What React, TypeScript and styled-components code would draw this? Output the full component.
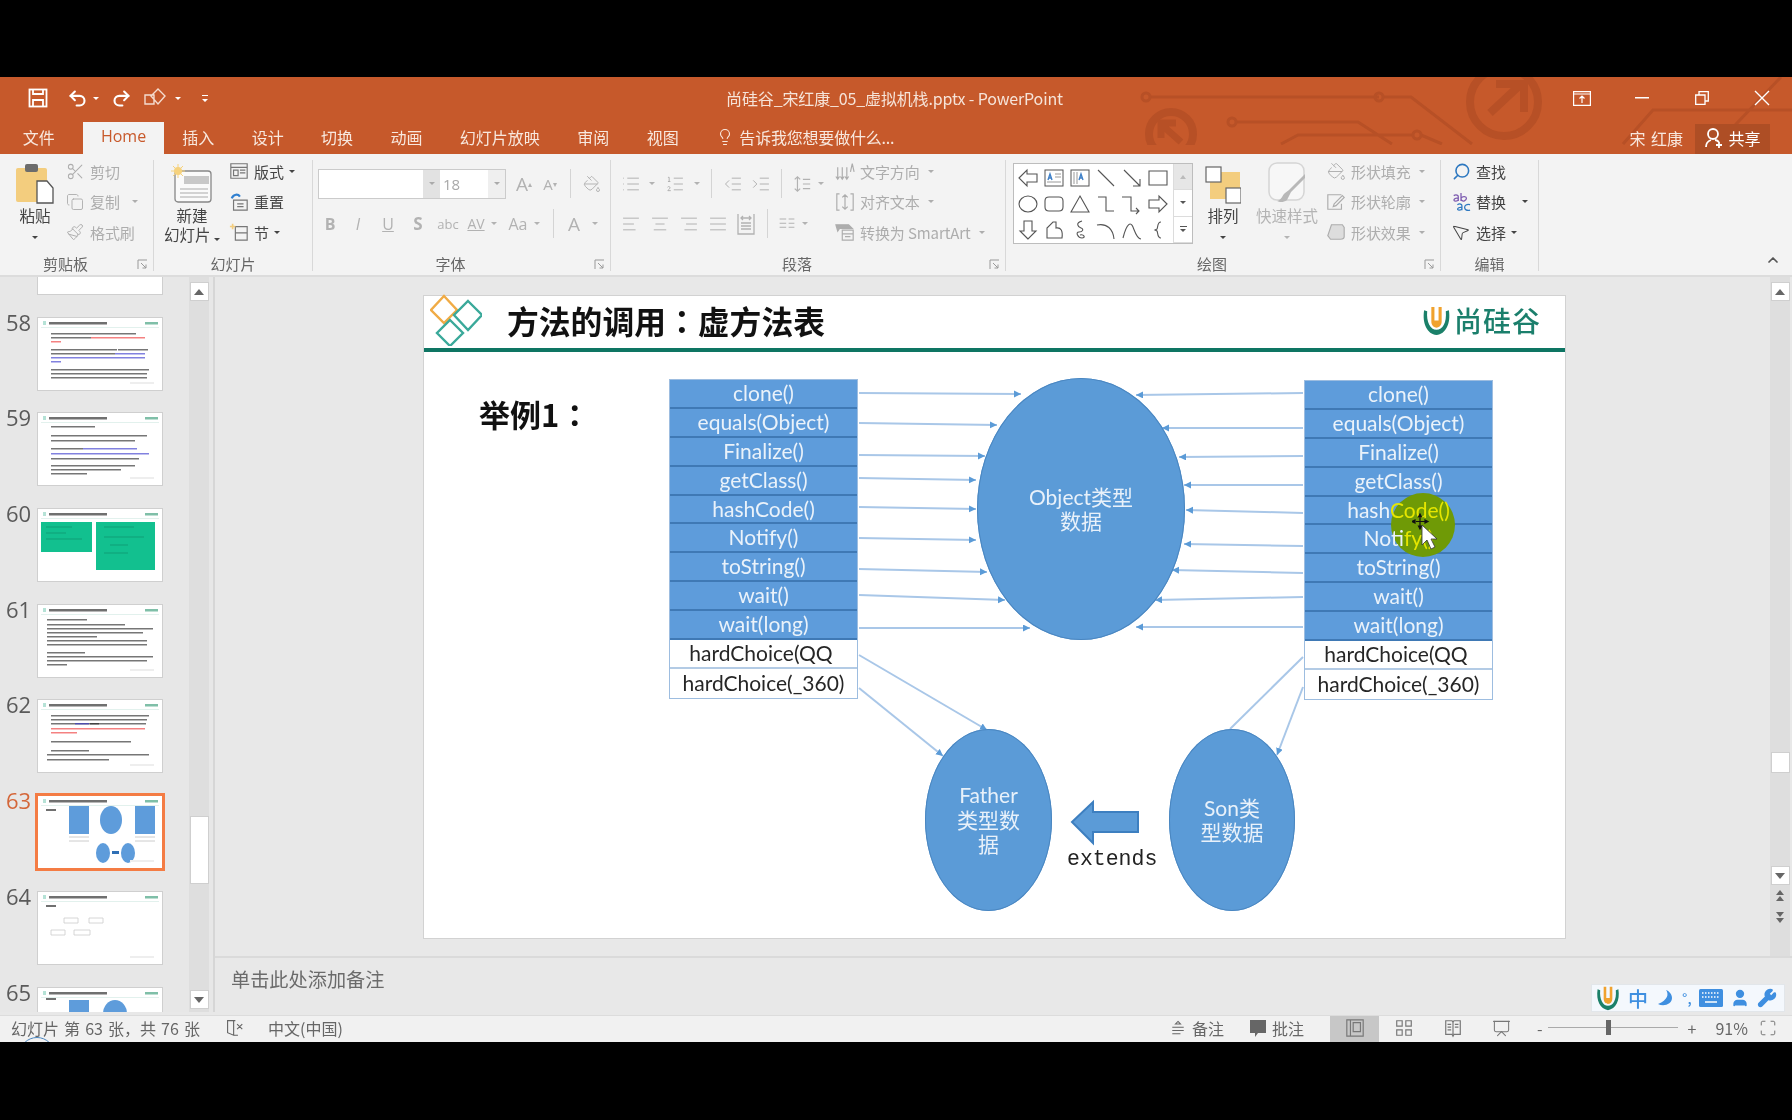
import React from "react";
import styled, { createGlobalStyle } from "styled-components";
import {
  AlignCenter,
  AlignJustify,
  AlignLeft,
  AlignRight,
  ChevronUp,
  Copy,
  Lightbulb,
  List,
  ListOrdered,
  IndentDecrease,
  IndentIncrease,
  Maximize,
  MousePointer2,
  Paintbrush,
  PaintBucket,
  Presentation,
  Redo2,
  Scissors,
  Search,
  Undo2,
  User,
  Wrench,
} from "lucide-react";

const CJK = `"Noto Sans CJK SC", "Noto Sans", sans-serif`;

const GlobalStyle = createGlobalStyle`
  html, body { margin: 0; padding: 0; background: #000; }
  * { box-sizing: border-box; }
`;

const Frame = styled.div`
  width: 1792px;
  height: 1120px;
  overflow: hidden;
  display: flex;
  flex-direction: column;
  background: #000;
  font-family: ${CJK};
  filter: blur(0.45px);
`;

const BlackBand = styled.div<{ $h: number }>`
  flex: none;
  height: ${(p) => p.$h}px;
  background: #000;
`;

const AppHead = styled.div`
  position: relative;
  flex: none;
  height: 77px;
  background: #c6592b;
  color: #f8e8de;
`;

const CircuitArt = styled.svg`
  position: absolute;
  left: 0;
  top: 0;
  pointer-events: none;
`;

const TitleBar = styled.div`
  position: relative;
  height: 47px;
  display: grid;
  grid-template-columns: 1fr auto 1fr;
  align-items: center;
  padding-bottom: 5px;
`;

const QuickAccess = styled.div`
  display: flex;
  align-items: center;
  padding-left: 28px;
  color: #fff;
  gap: 5px;
`;

const DocTitle = styled.div`
  font-size: 16px;
  letter-spacing: -0.15px;
  margin-left: -3px;
  color: #f6e4d9;
  white-space: nowrap;
`;

const WindowButtons = styled.div`
  display: flex;
  justify-content: flex-end;
`;

const WinBtn = styled.span`
  width: 60px;
  height: 30px;
  display: flex;
  align-items: center;
  justify-content: center;
`;

const TabRow = styled.div`
  position: relative;
  height: 30px;
  display: flex;
  align-items: stretch;
  padding-left: 4px;
`;

const Tab = styled.span<{ $active?: boolean }>`
  display: flex;
  align-items: center;
  padding: 0 ${(p) => (p.$active ? 17.5 : 18.7)}px 4px;
  font-size: 16px;
  white-space: nowrap;
  margin: ${(p) => (p.$active ? "-2px 0 0 10px" : "0")};
  background: ${(p) => (p.$active ? "#f3f3f3" : "transparent")};
  color: ${(p) => (p.$active ? "#c8592b" : "#f8e8de")};
  font-family: ${(p) => (p.$active ? `"Open Sans", sans-serif` : CJK)};
`;

const TellMe = styled.span`
  display: flex;
  align-items: center;
  gap: 5px;
  margin-left: 19px;
  padding-bottom: 4px;
  font-size: 16px;
  letter-spacing: -0.2px;
  white-space: nowrap;
`;

const AccountArea = styled.div`
  margin-left: auto;
  display: flex;
  align-items: center;
  gap: 12px;
  padding-right: 22px;
  font-size: 16px;
`;

const UserName = styled.span`
  word-spacing: 2px;
  padding-bottom: 3px;
`;

const ShareBtn = styled.span`
  width: 75px;
  height: 30px;
  display: flex;
  align-items: center;
  justify-content: center;
  gap: 4px;
  padding-bottom: 2px;
  background: #ae4e25;
  color: #fff;
`;

const Ribbon = styled.div`
  flex: none;
  position: relative;
  height: 123px;
  display: flex;
  background: #f3f3f3;
  border-bottom: 2px solid #dcdcdc;
`;

const Group = styled.section<{ $w: number }>`
  position: relative;
  flex: none;
  width: ${(p) => p.$w}px;
  display: flex;
  flex-direction: column;
  margin: 6px 0 4px;
  border-right: 1px solid #d8d8d8;
`;

const GroupBody = styled.div<{ $pl: number }>`
  flex: none;
  height: 97px;
  margin-top: -2px;
  display: flex;
  padding-left: ${(p) => p.$pl}px;
`;

const GroupLabel = styled.div<{ $launch?: boolean }>`
  position: relative;
  flex: 1;
  min-height: 0;
  display: flex;
  align-items: center;
  justify-content: center;
  padding-right: ${(p) => (p.$launch ? 22 : 0)}px;
  font-size: 15px;
  line-height: 17px;
  color: #666;
`;

const Launcher = styled.svg`
  position: absolute;
  right: 5px;
  bottom: 1px;
  color: #999;
`;

const Big = styled.div<{ $w: number; $ml?: number; $off?: boolean }>`
  flex: none;
  width: ${(p) => p.$w}px;
  margin-left: ${(p) => p.$ml ?? 0}px;
  display: flex;
  flex-direction: column;
  align-items: center;
  color: ${(p) => (p.$off ? "#b4b4b4" : "#444")};
  font-size: 15.5px;
  line-height: 19px;
  white-space: nowrap;
`;

const BigIcon = styled.div`
  height: 48px;
  display: flex;
  align-items: flex-end;
  justify-content: center;
  padding-bottom: 2px;
`;

const Stack = styled.div<{ $ml: number }>`
  flex: none;
  margin: -2px 0 0 ${(p) => p.$ml}px;
  display: flex;
  flex-direction: column;
`;

const Item = styled.div<{ $off?: boolean }>`
  flex: none;
  height: 30.5px;
  display: flex;
  align-items: center;
  gap: 5px;
  font-size: 15px;
  letter-spacing: -0.1px;
  white-space: nowrap;
  color: ${(p) => (p.$off ? "#adadad" : "#444")};
`;

const ItemIcon = styled.span`
  width: 20px;
  height: 20px;
  display: flex;
  align-items: center;
  justify-content: center;
`;

const Caret = styled.i<{ $ml?: number }>`
  display: inline-block;
  width: 0;
  height: 0;
  margin-left: ${(p) => p.$ml ?? 0}px;
  border-left: 3px solid transparent;
  border-right: 3px solid transparent;
  border-top: 3.5px solid currentColor;
`;

const BigCaret = styled(Caret)`
  margin-top: 11px;
`;

const ToolColumn = styled.div<{ $w: number }>`
  flex: none;
  width: ${(p) => p.$w}px;
  display: flex;
  flex-direction: column;
  gap: 11px;
  padding-top: 11px;
`;

const ToolRow = styled.div`
  height: 29px;
  display: flex;
  align-items: center;
  color: #b2b2b2;
`;

const Cell = styled.span<{ $w: number; $ml?: number; $weight?: number; $size?: number; $italic?: boolean; $under?: boolean }>`
  flex: none;
  width: ${(p) => p.$w}px;
  margin-left: ${(p) => p.$ml ?? 0}px;
  display: flex;
  align-items: center;
  justify-content: center;
  font-family: "Open Sans", sans-serif;
  font-size: ${(p) => p.$size ?? 15}px;
  font-weight: ${(p) => p.$weight ?? 400};
  font-style: ${(p) => (p.$italic ? "italic" : "normal")};
  text-decoration: ${(p) => (p.$under ? "underline" : "none")};
`;

const TinyMark = styled.sup`
  font-size: 8px;
`;

const ToolSep = styled.span<{ $ml: number }>`
  flex: none;
  width: 1px;
  height: 29px;
  margin-left: ${(p) => p.$ml}px;
  background: #d4d4d4;
`;

const FontBox = styled.div`
  flex: none;
  width: 188px;
  height: 30px;
  display: flex;
  border: 1px solid #cbcbcb;
  background: #fff;
`;

const FontName = styled.span`
  width: 104px;
`;

const FontDrop = styled.span<{ $tone: string }>`
  width: 17px;
  display: flex;
  align-items: center;
  justify-content: center;
  background: ${(p) => p.$tone};
  color: #aaa;
`;

const FontSize = styled.span`
  flex: 1;
  display: flex;
  align-items: center;
  padding-left: 3px;
  font-family: "Open Sans", sans-serif;
  font-size: 15px;
  color: #a8a8a8;
`;

const Gallery = styled.div`
  flex: none;
  margin: 5px 0 0 7px;
  width: 180px;
  height: 81px;
  display: flex;
  border: 1px solid #bdbdbd;
  background: #fff;
`;

const ShapeGrid = styled.div`
  width: 159px;
  padding: 1px;
  display: grid;
  grid-template-columns: repeat(6, 26px);
  grid-auto-rows: 26px;
  place-items: center;
`;

const GalleryScroll = styled.div`
  flex: 1;
  display: flex;
  flex-direction: column;
  border-left: 1px solid #dcdcdc;
`;

const GalleryBtn = styled.span<{ $off?: boolean }>`
  flex: 1;
  display: flex;
  flex-direction: column;
  gap: 2px;
  align-items: center;
  justify-content: center;
  color: ${(p) => (p.$off ? "#bbb" : "#555")};
  background: ${(p) => (p.$off ? "#e6e6e6" : "#fff")};
  border-bottom: 1px solid #dcdcdc;
`;

const UpTri = styled.i`
  width: 0;
  height: 0;
  border-left: 3px solid transparent;
  border-right: 3px solid transparent;
  border-bottom: 4px solid currentColor;
`;

const Bar = styled.i`
  width: 7px;
  height: 1px;
  background: currentColor;
`;

const CollapseBtn = styled.span`
  position: absolute;
  right: 11px;
  bottom: 2px;
  color: #555;
`;

const Workspace = styled.div`
  flex: none;
  height: 738px;
  display: flex;
  background: #e8e8e8;
`;

const Sidebar = styled.aside`
  flex: none;
  width: 215px;
  display: flex;
  background: #e7e7e7;
  margin-bottom: 3px;
  border-right: 2px solid #d6d6d6;
`;

const SlideList = styled.div`
  flex: none;
  width: 189px;
  overflow: hidden;
`;

const SlideRows = styled.div`
  margin-top: -55px;
`;

const SlideRow = styled.div<{ $current?: boolean }>`
  height: 95.7px;
  display: flex;
  align-items: flex-start;
  padding-left: 6px;
  font-family: "Open Sans", sans-serif;
  font-size: 22px;
  line-height: 20px;
  color: ${(p) => (p.$current ? "#d4673a" : "#5a5a5a")};
`;

const SlideNum = styled.span`
  width: 31.5px;
  margin-top: -6px;
`;

const ThumbBox = styled.div<{ $current?: boolean }>`
  flex: none;
  width: 124px;
  height: 72px;
  background: #fff;
  outline: ${(p) => (p.$current ? "3px solid #f47c44" : "1px solid #cfcfcf")};
  line-height: 0;
`;

const PreviewSvg = styled.svg`
  filter: blur(0.5px);
`;

const ScrollTrack = styled.div`
  flex: none;
  width: 20px;
  display: flex;
  flex-direction: column;
  align-items: center;
  padding: 5px 0 3px;
  background: #dedede;
`;

const ScrollBtn = styled.span`
  flex: none;
  width: 19px;
  height: 19px;
  display: flex;
  align-items: center;
  justify-content: center;
  background: #fff;
  border: 1px solid #cfcfcf;
  color: #666;
`;

const ScrollThumb = styled.span<{ $top: number; $h: number; $mb?: number }>`
  flex: none;
  width: 19px;
  height: ${(p) => p.$h}px;
  margin-top: ${(p) => p.$top}px;
  margin-bottom: ${(p) => (p.$mb ? `${p.$mb}px` : "auto")};
  background: #fff;
  border: 1px solid #cfcfcf;
`;

const DownTri = styled.i`
  width: 0;
  height: 0;
  border-left: 5px solid transparent;
  border-right: 5px solid transparent;
  border-top: 6px solid currentColor;
`;

const SmallUp = styled(UpTri)`
  border-left-width: 5px;
  border-right-width: 5px;
  border-bottom-width: 6px;
`;

const JumpUp = styled(UpTri)`
  border-left-width: 4px;
  border-right-width: 4px;
  border-bottom-width: 5px;
`;

const JumpDown = styled(DownTri)`
  border-left-width: 4px;
  border-right-width: 4px;
  border-top-width: 5px;
`;

const EditorColumn = styled.div`
  flex: 1;
  display: flex;
  flex-direction: column;
  min-width: 0;
`;

const EditorTop = styled.div`
  flex: none;
  height: 681px;
  display: flex;
  border-bottom: 2px solid #dadada;
`;

const SlidePane = styled.div`
  flex: 1;
  padding: 19px 0 0 209px;
`;

const EditorScroll = styled(ScrollTrack)`
  margin-right: 2px;
`;

const PageJump = styled.span<{ $mt: number }>`
  margin-top: ${(p) => p.$mt}px;
  display: flex;
  flex-direction: column;
  align-items: center;
  gap: 1px;
  color: #666;
`;

const NotesBox = styled.div`
  flex: 1;
  padding: 9px 0 0 16px;
  font-size: 19.2px;
  line-height: 24px;
  color: #6b6b6b;
`;

const Slide = styled.div`
  width: 1141px;
  height: 642px;
  background: #fff;
  box-shadow: 0 0 0 1px #d2d2d2;
  display: flex;
  flex-direction: column;
`;

const SlideHead = styled.header`
  flex: none;
  height: 56px;
  display: flex;
  align-items: center;
  padding: 0 24px 4px 6px;
  border-bottom: 4px solid #0e7563;
`;

const SlideTitle = styled.h1`
  margin: 0 0 0 25px;
  font-size: 31.8px;
  line-height: 40px;
  font-weight: 700;
  color: #111;
  white-space: nowrap;
`;

const Colon = styled.span`
  font-family: "Noto Sans CJK TC", sans-serif;
`;

const Brand = styled.div`
  margin-left: auto;
  display: flex;
  align-items: center;
  gap: 2px;
  font-size: 28px;
  font-weight: 500;
  letter-spacing: 1px;
  color: #1b7f6c;
  white-space: nowrap;
`;

const Canvas = styled.div`
  position: relative;
  flex: 1;
`;

const ArrowLayer = styled.svg`
  position: absolute;
  left: 0;
  top: 0;
`;

const Example = styled.div`
  position: absolute;
  left: 55px;
  top: 43px;
  font-size: 31px;
  line-height: 38px;
  font-weight: 700;
  color: #111;
`;

const MethodTable = styled.div<{ $x: number; $y: number }>`
  position: absolute;
  left: ${(p) => p.$x}px;
  top: ${(p) => p.$y}px;
  width: 189px;
  border: 1px solid #9dbde0;
`;

const MethodRow = styled.div<{ $plain?: boolean; $pr?: number }>`
  height: 28.9px;
  display: flex;
  align-items: center;
  justify-content: center;
  padding: 0 ${(p) => p.$pr ?? 0}px 2px 0;
  font-family: Lato, sans-serif;
  font-size: 21px;
  background: ${(p) => (p.$plain ? "#fff" : "#5e9cdb")};
  color: ${(p) => (p.$plain ? "#262626" : "#eaf2fa")};
  border-bottom: 2px solid ${(p) => (p.$plain ? "#b3cbe5" : "#3f79b5")};
  &:last-child { border-bottom: 0; }
`;

const RowText = styled.span`
  position: relative;
  z-index: 3;
  white-space: nowrap;
`;

const Lit = styled.span`
  color: #e6e600;
`;

const Ellipse = styled.div<{ $x: number; $y: number; $w: number; $h: number }>`
  position: absolute;
  left: ${(p) => p.$x}px;
  top: ${(p) => p.$y}px;
  width: ${(p) => p.$w}px;
  height: ${(p) => p.$h}px;
  border-radius: 50%;
  background: #5b9bd7;
  box-shadow: inset 0 0 0 1px #4a86c0;
  display: flex;
  align-items: center;
  justify-content: center;
  text-align: center;
  font-size: 21px;
  line-height: 24.5px;
  color: #e8f1fa;
`;

const EllipseText = styled.div<{ $w: number }>`
  width: ${(p) => p.$w}px;
  font-family: Lato, "Noto Sans CJK SC", sans-serif;
`;

const ExtendsLabel = styled.div`
  position: absolute;
  left: 643px;
  top: 494px;
  font-family: "Liberation Mono", monospace;
  font-size: 21.5px;
  line-height: 26px;
  color: #222;
`;

const Highlight = styled.div`
  position: absolute;
  left: 967px;
  top: 141px;
  width: 64px;
  height: 64px;
  border-radius: 50%;
  background: #6f9a06;
  z-index: 2;
`;

const Pointer = styled.svg`
  position: absolute;
  left: 988px;
  top: 161px;
  z-index: 4;
`;

const StatusBar = styled.footer`
  flex: none;
  position: relative;
  height: 27px;
  display: flex;
  align-items: center;
  overflow: hidden;
  background: #f1f1f1;
  border-top: 1px solid #dcdcdc;
  font-size: 16px;
  color: #666;
  white-space: nowrap;
`;

const StatusText = styled.span<{ $ml: number; $w?: number }>`
  margin-left: ${(p) => p.$ml}px;
  padding-bottom: 3px;
  display: flex;
  align-items: center;
  gap: 5px;
  word-spacing: 1.5px;
  ${(p) => (p.$w ? `width: ${p.$w}px;` : "")}
`;

const ViewBtn = styled.span<{ $active?: boolean; $ml?: number }>`
  flex: none;
  width: 49px;
  height: 26px;
  margin-left: ${(p) => p.$ml ?? 0}px;
  padding-bottom: 2px;
  display: flex;
  align-items: center;
  justify-content: center;
  background: ${(p) => (p.$active ? "#c7c7c7" : "transparent")};
  color: #777;
`;

const ZoomSlider = styled.span`
  position: relative;
  width: 130px;
  height: 1px;
  margin: 0 5px 3px;
  background: #aaa;
`;

const ZoomKnob = styled.i`
  position: absolute;
  left: 58px;
  top: -7px;
  width: 5px;
  height: 15px;
  background: #666;
`;

const ImeBar = styled.div`
  position: absolute;
  left: 1591px;
  top: 984px;
  width: 194px;
  height: 28px;
  display: flex;
  align-items: center;
  gap: 7px;
  padding-left: 3px;
  background: #f4f8fd;
  border: 1px solid #e2e6ea;
  color: #3f8fe0;
  font-size: 20px;
  font-weight: 500;
  z-index: 5;
`;

const ImeDot = styled.span`
  font-size: 14px;
`;

const TouchArc = styled.i`
  position: absolute;
  left: 19px;
  top: 21px;
  width: 36px;
  height: 36px;
  border-radius: 50%;
  border: 1px solid #4a86c0;
`;

// small drawings -----------------------------------------------------------

const I = ({ s = 20, children, c = "currentColor", w = 1.3 }: { s?: number; children: React.ReactNode; c?: string; w?: number }) => (
  <svg width={s} height={s} viewBox="0 0 22 22" fill="none" stroke={c} strokeWidth={w}>
    {children}
  </svg>
);

const LauncherIcon = () => (
  <Launcher width="11" height="11" viewBox="0 0 11 11" fill="none" stroke="currentColor">
    <path d="M1 10V1h9" />
    <path d="M4 4l5 5M9 5.500V9H5.500" />
  </Launcher>
);

const PasteIcon = () => (
  <svg width="40" height="42" viewBox="0 0 40 42">
    <rect x="1" y="6" width="31" height="34" rx="2" fill="#f3cd7e" />
    <rect x="10" y="2" width="13" height="8" rx="2" fill="#6c6c6c" />
    <path d="M22 19h10l6 7v15H22z" fill="#fff" stroke="#555" strokeWidth="1.3" />
  </svg>
);

const NewSlideIcon = () => (
  <svg width="42" height="40" viewBox="0 0 42 40">
    <rect x="4" y="7" width="36" height="31" rx="3" fill="#fafafa" stroke="#888" strokeWidth="1.3" />
    <rect x="13" y="12" width="25" height="8" fill="#c8c8c8" />
    <path d="M9 25h28M9 29h28M9 33h28" stroke="#aaa" />
    <circle cx="7" cy="7" r="4" fill="#f6d27d" />
    <path d="M7 0v14M0 7h14M2 2l10 10M12 2L2 12" stroke="#f6d27d" />
  </svg>
);

const ArrangeIcon = () => (
  <svg width="36" height="38" viewBox="0 0 36 38">
    <rect x="11" y="6" width="24" height="24" fill="#f3cd7e" />
    <rect x="5" y="15" width="18" height="18" fill="#f3cd7e" />
    <rect x="1" y="1" width="15" height="15" fill="#fff" stroke="#666" strokeWidth="1.2" />
    <rect x="21" y="22" width="15" height="15" fill="#fff" stroke="#666" strokeWidth="1.2" />
  </svg>
);

const QuickStyleIcon = () => (
  <svg width="40" height="42" viewBox="0 0 40 42">
    <rect x="2" y="1" width="35" height="37" rx="8" fill="#f7f7f7" stroke="#d5d5d5" strokeWidth="1.5" />
    <path d="M38 16L24 30l-4 8c-4 3-8 2-10 1 5-1 5-6 8-8l4-3 16-16z" fill="#b8b8b8" />
  </svg>
);

const KeyboardIcon = () => (
  <svg width="24" height="18" viewBox="0 0 24 18">
    <rect width="24" height="18" rx="1.500" fill="currentColor" />
    <path d="M3 4h18M3 8h18" stroke="#fff" strokeWidth="1.500" strokeDasharray="1.500 1.500" />
    <path d="M6 13h12" stroke="#fff" strokeWidth="1.500" />
  </svg>
);

const shapePaths = [
  "M2 11l8-8v4h10v8H10v4z",
  "",
  "",
  "M3 3l16 16",
  "M3 3l16 16M19 12v7h-7",
  "M2 4h18v14H2z",
  "M20 11c0 4-4 8-9 8s-9-4-9-8 4-8 9-8 9 4 9 8z",
  "M6 4h10q4 0 4 4v6q0 4-4 4H6q-4 0-4-4V8q0-4 4-4z",
  "M11 3l9 16H2z",
  "M3 4h8v14h8",
  "M1 4h9v14h8M15 15l3 3-3 3",
  "M20 11l-8-8v4H2v8h10v4z",
  "M11 20l-8-8h4V2h8v10h4z",
  "M4 19V9l6-6h3v6c5-1 7 3 6 10z",
  "M13 2C6 4 9 8 12 9s2 4-2 4-1 6 3 6 2-4-2-3",
  "M2 6c10-2 16 4 17 14",
  "M2 19C6 3 10 3 12 8s4 12 8 12",
  "M14 3c-4 0-3 6-4 7l-2 1 2 1c1 1 0 7 4 7",
];

const ShapeIcon = ({ index }: { index: number }) => {
  if (index === 1 || index === 2) {
    return (
      <svg width="22" height="22" viewBox="0 0 22 22" fill="none" stroke="#555">
        <rect x="2" y="3" width="18" height="16" />
        <path d={index === 1 ? "M5 13l2-6 2 6M6 11h2" : "M10 13l2-6 2 6M11 11h2"} stroke="#3f80c8" strokeWidth="1.400" />
        {index === 1 ? <path d="M12 7h6M12 10h6M4 15h14" stroke="#999" /> : <path d="M5 5v12M8 5v12" stroke="#999" />}
      </svg>
    );
  }
  return (
    <I s={22} c="#555" w={1.1}>
      <path d={shapePaths[index]} />
    </I>
  );
};

const UsLogo = ({ s }: { s: number }) => (
  <svg width={s} height={s} viewBox="0 0 30 30">
    <path d="M3 5C1 18 6 28 15 29 24 28 29 18 27 5l-3 1c1 11-3 18-9 18S5 16 6 6z" fill="#1b8069" />
    <path d="M10 2h3v13h4V2h3v14c0 4-3 6-5 6s-5-2-5-6z" fill="#f0a22e" />
  </svg>
);

const Diamonds = () => (
  <svg width="52" height="52" viewBox="0 0 52 52" fill="none" strokeWidth="2.4">
    <path d="M14 2l13 14-13 13L1 16z" stroke="#f0ab45" />
    <path d="M38 7l14 14-14 15-14-15z" stroke="#3aa99a" />
    <path d="M20 26l13 13-13 13L7 39z" stroke="#3aa99a" />
  </svg>
);

const rightArrows = [
  [1303, 393, 1136, 395],
  [1303, 428, 1162, 428],
  [1303, 456, 1179, 457],
  [1303, 485, 1184, 485],
  [1303, 513, 1186, 510],
  [1303, 546, 1184, 544],
  [1303, 573, 1172, 570],
  [1303, 597, 1155, 600],
  [1303, 627, 1136, 627],
  [1303, 687, 1277, 755],
];

const leftArrows = [
  [859, 393, 1021, 394],
  [859, 423, 997, 425],
  [859, 455, 985, 456],
  [859, 478, 976, 480],
  [859, 507, 976, 509],
  [859, 538, 976, 540],
  [859, 569, 987, 572],
  [859, 595, 1005, 600],
  [859, 628, 1030, 628],
  [859, 655, 987, 730],
  [859, 688, 943, 756],
];

const methods = [
  "clone()",
  "equals(Object)",
  "Finalize()",
  "getClass()",
  "hashCode()",
  "Notify()",
  "toString()",
  "wait()",
  "wait(long)",
];

type Line = [number, number, number, string?];

const textLines: Record<number, Line[]> = {
  57: [],
  58: [
    [13, 15, 85], [13, 19, 40], [53, 19, 54, "#e33"], [13, 23, 10, "#e33"],
    [13, 31, 66], [80, 31, 30], [13, 35, 64], [77, 35, 30, "#33c"], [13, 39, 94, "#33c"], [13, 43, 10, "#33c"],
    [13, 51, 98], [13, 55, 96], [13, 59, 96],
  ],
  59: [
    [13, 13, 44], [13, 22, 96], [13, 27, 84], [13, 35, 32], [45, 35, 54, "#33c"], [13, 40, 98, "#33c"], [13, 45, 88],
    [13, 52, 84], [13, 56, 70], [13, 60, 36],
  ],
  61: [
    [9, 14, 40], [9, 19, 78], [9, 23, 106], [9, 27, 96], [9, 31, 50], [9, 35, 100], [9, 39, 100],
    [9, 47, 38], [9, 51, 106], [9, 55, 100], [9, 59, 20],
  ],
  62: [
    [13, 15, 98], [13, 19, 96], [13, 23, 48], [37, 23, 14, "#33c"], [52, 23, 56], [13, 28, 94, "#e33"], [13, 32, 26, "#e33"],
    [13, 41, 80], [13, 50, 38], [9, 54, 102], [9, 59, 62],
  ],
};

const SlidePreview = ({ n }: { n: number }) => (
  <PreviewSvg width="124" height="72" viewBox="0 0 124 72">
    {n !== 57 && (
      <>
        <rect x="5" y="3" width="3" height="4" fill="#b5e2d6" />
        <rect x="11" y="4" width="58" height="2.500" fill="#333" opacity="0.7" />
        <rect x="107" y="4" width="13" height="2.500" fill="#7fbfa8" />
        <rect x="3" y="9" width="118" height="0.6" fill="#cfe8e2" />
      </>
    )}
    {(textLines[n] ?? []).map(([x, y, w, c], i) => (
      <rect key={i} x={x} y={y} width={w} height="1.500" fill={c ?? "#222"} opacity="0.62" />
    ))}
    {n === 60 && (
      <>
        <rect x="3" y="13" width="51" height="30" fill="#12c08f" />
        <rect x="58" y="13" width="59" height="48" fill="#12c08f" />
        <path d="M8 18h26M8 24h20M8 30h36M66 18h30M66 28h40M72 36h18M66 44h24" stroke="#0e9f76" strokeWidth="1" />
      </>
    )}
    {n === 63 && (
      <>
        <rect x="8" y="13" width="10" height="2" fill="#333" opacity="0.7" />
        <rect x="31" y="10" width="20" height="28" fill="#5e9cdb" />
        <rect x="97" y="10" width="20" height="28" fill="#5e9cdb" />
        <path d="M31 41h20M31 45h20M97 41h20M97 45h20" stroke="#ccc" />
        <ellipse cx="73" cy="24" rx="11" ry="14" fill="#5e9cdb" />
        <ellipse cx="65" cy="57" rx="7" ry="10" fill="#5e9cdb" />
        <ellipse cx="90" cy="57" rx="7" ry="10" fill="#5e9cdb" />
        <rect x="74" y="55" width="7" height="3" fill="#2f6fb5" />
      </>
    )}
    {n === 64 && (
      <>
        <rect x="8" y="13" width="10" height="2" fill="#333" opacity="0.7" />
        <path d="M26 26h14v5H26zM51 26h14v5H51zM13 38h14v5H13zM36 38h16v5H36z" fill="none" stroke="#ccc" strokeWidth="0.8" />
      </>
    )}
    {n === 65 && (
      <>
        <rect x="8" y="10" width="10" height="2" fill="#333" opacity="0.7" />
        <rect x="31" y="12" width="20" height="28" fill="#5e9cdb" />
        <ellipse cx="77" cy="26" rx="12" ry="14" fill="#5e9cdb" />
      </>
    )}
    {n !== 57 && n !== 60 && <rect x="92" y="64" width="24" height="2" fill="#eee" />}
  </PreviewSvg>
);

const App = () => (
  <Frame>
    <GlobalStyle />
    <BlackBand $h={77} />
    <AppHead>
      <CircuitArt width="1792" height="68" viewBox="0 77 1792 68" fill="none" stroke="#b75026" strokeWidth="3">
        <path d="M1150 97h229M1383 97h28l61 47M1236 122h122l34 22M1281 144l17-9h115M1421 135l21 9" />
        <circle cx="1146" cy="97" r="4" />
        <circle cx="1379" cy="97" r="4" />
        <circle cx="1232" cy="122" r="4" />
        <circle cx="1417" cy="135" r="4" />
        <circle cx="1504" cy="102" r="34" strokeWidth="8" />
        <path d="M1490 113l30-28M1496 84h28v28" strokeWidth="8" />
        <circle cx="1171" cy="134" r="22" strokeWidth="8" />
        <path d="M1181 142l-18-16M1161 138v-15h15" strokeWidth="7" />
        <path d="M1623 144l30-34h139M1717 144l64-67" />
      </CircuitArt>
      <TitleBar>
        <QuickAccess>
          <svg width="20" height="20" viewBox="0 0 20 20" fill="none" stroke="#fff" strokeWidth="1.8">
            <rect x="1.500" y="1.500" width="17" height="17" />
            <path d="M5 2v4h10V2M5 18v-6h10v6" />
          </svg>
          <Undo2 size={21} strokeWidth={2.4} style={{ marginLeft: 14 }} />
          <Caret />
          <Redo2 size={21} strokeWidth={2.4} style={{ marginLeft: 7 }} />
          <svg width="26" height="24" viewBox="0 0 26 24" fill="none" stroke="#f4dccf" strokeWidth="1.4" style={{ marginLeft: 7 }}>
            <path d="M1 9h9v9H1zM14 3l7 7-7 8-7-8z" />
          </svg>
          <Caret />
          <svg width="8" height="12" viewBox="0 0 8 12" fill="#fff" style={{ marginLeft: 15 }}>
            <path d="M1 3h6v1H1zM1 7l3 3 3-3z" />
          </svg>
        </QuickAccess>
        <DocTitle>尚硅谷_宋红康_05_虚拟机栈.pptx - PowerPoint</DocTitle>
        <WindowButtons>
          <WinBtn>
            <svg width="18" height="15" viewBox="0 0 18 15" fill="none" stroke="#fff" strokeWidth="1.2">
              <path d="M.6.6h16.800v13.800H.6zM1 3h16M9 12V5M6.500 7.500L9 5l2.500 2.500" />
            </svg>
          </WinBtn>
          <WinBtn>
            <svg width="14" height="2" viewBox="0 0 14 2"><rect width="14" height="1.500" fill="#fff" /></svg>
          </WinBtn>
          <WinBtn>
            <svg width="14" height="14" viewBox="0 0 14 14" fill="none" stroke="#fff" strokeWidth="1.3">
              <path d="M.7 4h9.300v9.300H.7zM4 4V.7h9.300V10H10" />
            </svg>
          </WinBtn>
          <WinBtn>
            <svg width="16" height="16" viewBox="0 0 16 16" stroke="#fff" strokeWidth="1.4">
              <path d="M1 1l14 14M15 1L1 15" />
            </svg>
          </WinBtn>
        </WindowButtons>
      </TitleBar>
      <TabRow>
        <Tab>文件</Tab>
        <Tab $active>Home</Tab>
        {["插入", "设计", "切换", "动画", "幻灯片放映", "审阅", "视图"].map((t) => (
          <Tab key={t}>{t}</Tab>
        ))}
        <TellMe>
          <Lightbulb size={18} strokeWidth={1.5} />
          告诉我您想要做什么...
        </TellMe>
        <AccountArea>
          <UserName>宋 红康</UserName>
          <ShareBtn>
            <svg width="20" height="22" viewBox="0 0 20 22" fill="none" stroke="#fff" strokeWidth="1.8">
              <circle cx="9" cy="7" r="5" />
              <path d="M2 20c0-4 2-6 5-7M11 13c2 0 3 1 4 2M15 15v6M12 18h6" />
            </svg>
            共享
          </ShareBtn>
        </AccountArea>
      </TabRow>
    </AppHead>

    <Ribbon>
      <Group $w={154}>
        <GroupBody $pl={15}>
          <Big $w={40}>
            <BigIcon><PasteIcon /></BigIcon>
            <span>粘贴</span>
            <BigCaret />
          </Big>
          <Stack $ml={10}>
            <Item $off>
              <ItemIcon><Scissors size={19} strokeWidth={1.3} /></ItemIcon>剪切
            </Item>
            <Item $off>
              <ItemIcon><Copy size={18} strokeWidth={1.2} /></ItemIcon>复制<Caret $ml={7} />
            </Item>
            <Item $off>
              <ItemIcon><Paintbrush size={18} strokeWidth={1.3} /></ItemIcon>格式刷
            </Item>
          </Stack>
        </GroupBody>
        <GroupLabel $launch>剪贴板<LauncherIcon /></GroupLabel>
      </Group>

      <Group $w={159}>
        <GroupBody $pl={8}>
          <Big $w={60}>
            <BigIcon><NewSlideIcon /></BigIcon>
            <span>新建</span>
            <span>幻灯片 <Caret /></span>
          </Big>
          <Stack $ml={7}>
            <Item>
              <ItemIcon>
                <I c="#777"><path d="M2 3h18v16H2zM2 7h18M5 10h5v6H5zM12 10h6M12 13h6" /></I>
              </ItemIcon>
              版式 <Caret />
            </Item>
            <Item>
              <ItemIcon>
                <I c="#777"><path d="M5 9h15v11H5zM9 13h7M9 16h7" /><path d="M3 7c2-5 7-5 9-2" stroke="#2f7fd0" strokeWidth="2.400" /></I>
              </ItemIcon>
              重置
            </Item>
            <Item>
              <ItemIcon>
                <I c="#777"><path d="M7 5h13v7H7zM7 12h13v8H7z" /><path d="M4 2v6M1 5h6" stroke="#f3cd7e" strokeWidth="1.800" /></I>
              </ItemIcon>
              节 <Caret />
            </Item>
          </Stack>
        </GroupBody>
        <GroupLabel>幻灯片</GroupLabel>
      </Group>

      <Group $w={298}>
        <GroupBody $pl={5}>
          <ToolColumn $w={293}>
            <ToolRow>
              <FontBox>
                <FontName />
                <FontDrop $tone="#e2e2e2"><Caret /></FontDrop>
                <FontSize>18</FontSize>
                <FontDrop $tone="#efefef"><Caret /></FontDrop>
              </FontBox>
              <Cell $w={24} $ml={6} $size={19}>A<TinyMark>▴</TinyMark></Cell>
              <Cell $w={24} $ml={2} $size={15}>A<TinyMark>▾</TinyMark></Cell>
              <ToolSep $ml={8} />
              <Cell $w={22} $ml={10}><PaintBucket size={18} strokeWidth={1.3} /></Cell>
            </ToolRow>
            <ToolRow>
              <Cell $w={24} $weight={700} $size={16}>B</Cell>
              <Cell $w={24} $ml={4} $italic $size={16}>I</Cell>
              <Cell $w={24} $ml={6} $under $size={16}>U</Cell>
              <Cell $w={24} $ml={6} $weight={700} $size={17}>S</Cell>
              <Cell $w={24} $ml={6} $size={13}>abc</Cell>
              <Cell $w={22} $ml={5} $size={14} $under>AV</Cell>
              <Cell $w={6} $ml={4}><Caret /></Cell>
              <Cell $w={24} $ml={9} $size={16}>Aa</Cell>
              <Cell $w={6} $ml={4}><Caret /></Cell>
              <ToolSep $ml={13} />
              <Cell $w={18} $ml={11} $size={19}>A</Cell>
              <Cell $w={6} $ml={9}><Caret /></Cell>
            </ToolRow>
          </ToolColumn>
        </GroupBody>
        <GroupLabel $launch>字体<LauncherIcon /></GroupLabel>
      </Group>

      <Group $w={395}>
        <GroupBody $pl={9}>
          <ToolColumn $w={205}>
            <ToolRow>
              <Cell $w={22}><List size={20} strokeWidth={1.2} /></Cell>
              <Cell $w={8} $ml={6}><Caret /></Cell>
              <Cell $w={22} $ml={8}><ListOrdered size={20} strokeWidth={1.2} /></Cell>
              <Cell $w={8} $ml={7}><Caret /></Cell>
              <ToolSep $ml={10} />
              <Cell $w={22} $ml={10}><IndentDecrease size={20} strokeWidth={1.2} /></Cell>
              <Cell $w={22} $ml={6}><IndentIncrease size={20} strokeWidth={1.2} /></Cell>
              <ToolSep $ml={9} />
              <Cell $w={20} $ml={10}>
                <I><path d="M6 3v16M3 6l3-3 3 3M3 16l3 3 3-3M12 6h8M12 11h8M12 16h8" /></I>
              </Cell>
              <Cell $w={8} $ml={5}><Caret /></Cell>
            </ToolRow>
            <ToolRow>
              <Cell $w={22}><AlignLeft size={20} strokeWidth={1.2} /></Cell>
              <Cell $w={22} $ml={7}><AlignCenter size={20} strokeWidth={1.2} /></Cell>
              <Cell $w={22} $ml={7}><AlignRight size={20} strokeWidth={1.2} /></Cell>
              <Cell $w={22} $ml={7}><AlignJustify size={20} strokeWidth={1.2} /></Cell>
              <Cell $w={22} $ml={6}>
                <I s={22}><path d="M3 1v20h16V1M6 5h10M8 3L6 5l2 2M14 3l2 2-2 2M6 10h10M6 13h10M6 16h10" /></I>
              </Cell>
              <ToolSep $ml={10} />
              <Cell $w={18} $ml={10}>
                <I><path d="M2 5h8M2 10h8M2 15h8M13 5h7M13 10h7M13 15h7" /></I>
              </Cell>
              <Cell $w={8} $ml={5}><Caret /></Cell>
            </ToolRow>
          </ToolColumn>
          <Stack $ml={10}>
            <Item $off>
              <ItemIcon>
                <I><path d="M3 7v12M8 7v12M13 7v12M1 17l2 3 2-3M6 17l2 3 2-3M11 17l2 3 2-3M17 12l2-9 2 9" /></I>
              </ItemIcon>
              文字方向<Caret $ml={3} />
            </Item>
            <Item $off>
              <ItemIcon>
                <I><path d="M5 2H2v18h3M17 2h3v18h-3M11 3v16M8 6l3-3 3 3M8 16l3 3 3-3" /></I>
              </ItemIcon>
              对齐文本<Caret $ml={3} />
            </Item>
            <Item $off>
              <ItemIcon>
                <I><path d="M8 9h12v11H8zM8 13h12M11 16h6" /><path d="M1 3h14l4 4H5l-2 3z" fill="currentColor" /></I>
              </ItemIcon>
              转换为 SmartArt<Caret $ml={3} />
            </Item>
          </Stack>
        </GroupBody>
        <GroupLabel $launch>段落<LauncherIcon /></GroupLabel>
      </Group>

      <Group $w={435}>
        <GroupBody $pl={0}>
          <Gallery>
            <ShapeGrid>
              {shapePaths.map((_, i) => (
                <ShapeIcon key={i} index={i} />
              ))}
            </ShapeGrid>
            <GalleryScroll>
              <GalleryBtn $off><UpTri /></GalleryBtn>
              <GalleryBtn><Caret /></GalleryBtn>
              <GalleryBtn><Bar /><Caret /></GalleryBtn>
            </GalleryScroll>
          </Gallery>
          <Big $w={36} $ml={12}>
            <BigIcon><ArrangeIcon /></BigIcon>
            <span>排列</span>
            <BigCaret />
          </Big>
          <Big $w={64} $ml={14} $off>
            <BigIcon><QuickStyleIcon /></BigIcon>
            <span>快速样式</span>
            <BigCaret />
          </Big>
          <Stack $ml={7}>
            <Item $off>
              <ItemIcon><PaintBucket size={19} strokeWidth={1.2} /></ItemIcon>形状填充<Caret $ml={3} />
            </Item>
            <Item $off>
              <ItemIcon>
                <I><path d="M17 3H2v16h15v-6M9 13l9-9 2 2-9 9-3 1z" /></I>
              </ItemIcon>
              形状轮廓<Caret $ml={3} />
            </Item>
            <Item $off>
              <ItemIcon>
                <I><path d="M6 3h12l2 3v10c0 2-2 3-4 3H5l-3-4z" fill="#ddd" /></I>
              </ItemIcon>
              形状效果<Caret $ml={3} />
            </Item>
          </Stack>
        </GroupBody>
        <GroupLabel $launch>绘图<LauncherIcon /></GroupLabel>
      </Group>

      <Group $w={98}>
        <GroupBody $pl={10}>
          <Stack $ml={0}>
            <Item>
              <ItemIcon><Search size={19} color="#2d78c0" strokeWidth={2} style={{ transform: "scaleX(-1)" }} /></ItemIcon>查找
            </Item>
            <Item>
              <ItemIcon>
                <svg width="22" height="24" viewBox="0 0 22 24" fill="none" strokeWidth="1.400">
                  <path d="M3 5c3-2 5 0 5 1v5M8 8c-5-1-6 3-3 3 2 0 3-1 3-2" stroke="#7d5bb0" />
                  <path d="M11 2v9M11 8c2-3 6-2 6 0s-4 5-6 1" stroke="#7d5bb0" />
                  <path d="M7 15c3-2 5 0 5 1v5M12 18c-5-1-6 3-3 3 2 0 3-1 3-2M21 15c-4-1-6 1-6 3s2 4 6 3" stroke="#2d78c0" />
                </svg>
              </ItemIcon>
              替换<Caret $ml={11} />
            </Item>
            <Item>
              <ItemIcon><MousePointer2 size={20} strokeWidth={1.2} style={{ transform: "rotate(-8deg)" }} /></ItemIcon>选择<Caret />
            </Item>
          </Stack>
        </GroupBody>
        <GroupLabel>编辑</GroupLabel>
      </Group>
      <CollapseBtn><ChevronUp size={16} strokeWidth={2.6} /></CollapseBtn>
    </Ribbon>

    <Workspace>
      <Sidebar>
        <SlideList>
          <SlideRows>
            {[57, 58, 59, 60, 61, 62, 63, 64, 65].map((n) => (
              <SlideRow key={n} $current={n === 63}>
                <SlideNum>{n === 57 ? "" : n}</SlideNum>
                <ThumbBox $current={n === 63}>
                  <SlidePreview n={n} />
                </ThumbBox>
              </SlideRow>
            ))}
          </SlideRows>
        </SlideList>
        <ScrollTrack>
          <ScrollBtn><SmallUp /></ScrollBtn>
          <ScrollThumb $top={515} $h={68} />
          <ScrollBtn><DownTri /></ScrollBtn>
        </ScrollTrack>
      </Sidebar>
      <EditorColumn>
        <EditorTop>
          <SlidePane>
            <Slide>
              <SlideHead>
                <Diamonds />
                <SlideTitle>方法的调用<Colon>{"\uFF1A"}</Colon>虚方法表</SlideTitle>
                <Brand>
                  <UsLogo s={31} />
                  尚硅谷
                </Brand>
              </SlideHead>
              <Canvas>
                <ArrowLayer width="1141" height="586" viewBox="424 352 1141 586" fill="none" stroke="#a9c7e8" strokeWidth="2">
                  <defs>
                    <marker id="head" markerWidth="8" markerHeight="8" refX="7" refY="3.500" orient="auto" markerUnits="userSpaceOnUse">
                      <path d="M0 0L7 3.500 0 7z" fill="#5b9bd7" stroke="none" />
                    </marker>
                  </defs>
                  {[...leftArrows, ...rightArrows].map(([x1, y1, x2, y2], i) => (
                    <line key={i} x1={x1} y1={y1} x2={x2} y2={y2} markerEnd="url(#head)" />
                  ))}
                  <line x1="1303" y1="657" x2="1230" y2="729" />
                  <path d="M1072 822l21-20v10h45v20h-45v11z" fill="#5b9bd7" stroke="#3d7fc0" strokeWidth="2" />
                </ArrowLayer>
                <Example>举例1<Colon>{"\uFF1A"}</Colon></Example>
                <MethodTable $x={245} $y={27}>
                  {methods.map((m) => (
                    <MethodRow key={m}><RowText>{m}</RowText></MethodRow>
                  ))}
                  <MethodRow $plain $pr={5}><RowText>hardChoice(QQ</RowText></MethodRow>
                  <MethodRow $plain><RowText>hardChoice(_360)</RowText></MethodRow>
                </MethodTable>
                <MethodTable $x={880} $y={28}>
                  {methods.map((m) => (
                    <MethodRow key={m}>
                      <RowText>
                        {m === "hashCode()" ? <>hash<Lit>Code()</Lit></> : m === "Notify()" ? <>Not<Lit>ify()</Lit></> : m}
                      </RowText>
                    </MethodRow>
                  ))}
                  <MethodRow $plain $pr={5}><RowText>hardChoice(QQ</RowText></MethodRow>
                  <MethodRow $plain><RowText>hardChoice(_360)</RowText></MethodRow>
                </MethodTable>
                <Ellipse $x={553} $y={26} $w={208} $h={262}>
                  <EllipseText $w={130}>Object类型 数据</EllipseText>
                </Ellipse>
                <Ellipse $x={501} $y={377} $w={127} $h={182}>
                  <EllipseText $w={70}>Father 类型数据</EllipseText>
                </Ellipse>
                <Ellipse $x={745} $y={377} $w={126} $h={182}>
                  <EllipseText $w={70}>Son类 型数据</EllipseText>
                </Ellipse>
                <ExtendsLabel>extends</ExtendsLabel>
                <Highlight />
                <Pointer width="26" height="38" viewBox="0 0 26 38">
                  <path d="M8 4v9M4 8.500h9M8 1L6.500 4h3zM8 16l-1.500-3h3zM0 8.500l3-1.500v3zM16 8.500l-3-1.500v3z" stroke="#111" strokeWidth="1.200" fill="#111" />
                  <path d="M10 12v20l5-5 4 9 4-2-4-8h6z" fill="#fff" stroke="#333" strokeWidth="0.800" />
                </Pointer>
              </Canvas>
            </Slide>
          </SlidePane>
          <EditorScroll>
            <ScrollBtn><SmallUp /></ScrollBtn>
            <ScrollThumb $top={451} $h={21} $mb={93} />
            <ScrollBtn><DownTri /></ScrollBtn>
            <PageJump $mt={5}>
              <JumpUp />
              <JumpUp />
            </PageJump>
            <PageJump $mt={11}>
              <JumpDown />
              <JumpDown />
            </PageJump>
          </EditorScroll>
        </EditorTop>
        <NotesBox>单击此处添加备注</NotesBox>
      </EditorColumn>
    </Workspace>

    <StatusBar>
      <TouchArc />
      <StatusText $ml={11} $w={193}>幻灯片 第 63 张{"\uFF0C"}共 76 张</StatusText>
      <StatusText $ml={21}>
        <I s={19}><path d="M10 3H3v14l7 3zM10 3h2M15 20h-5M14 7l6 6M20 7l-6 6" /></I>
      </StatusText>
      <StatusText $ml={24} $w={880}>中文(中国)</StatusText>
      <StatusText $ml={21}>
        <I s={18}><path d="M11 3l3 3H8zM4 10h14M4 14h14M4 18h10" /></I>
        备注
      </StatusText>
      <StatusText $ml={25}>
        <svg width="18" height="18" viewBox="0 0 18 18" fill="#666"><path d="M1 1h16v13H9l-3 4v-4H1z" /></svg>
        批注
      </StatusText>
      <ViewBtn $active $ml={26}>
        <I s={20}><path d="M2 2h18v18H2zM6 2v18M9 5h8v10H9z" /></I>
      </ViewBtn>
      <ViewBtn>
        <I s={20}><path d="M3 3h6v6H3zM13 3h6v6h-6zM3 13h6v6H3zM13 13h6v6h-6z" /></I>
      </ViewBtn>
      <ViewBtn>
        <I s={20}><path d="M3 3h7l1 2 1-2h7v15h-7l-1 2-1-2H3zM11 5v13M5 7h4M5 10h4M5 13h4M13 7h4M13 10h4" /></I>
      </ViewBtn>
      <ViewBtn>
        <Presentation size={19} strokeWidth={1.3} />
      </ViewBtn>
      <StatusText $ml={11}>-</StatusText>
      <ZoomSlider><ZoomKnob /></ZoomSlider>
      <StatusText $ml={5}>+</StatusText>
      <StatusText $ml={19}>91%</StatusText>
      <StatusText $ml={11}><Maximize size={18} strokeWidth={1.2} /></StatusText>
    </StatusBar>

    <BlackBand $h={78} />

    <ImeBar>
      <UsLogo s={26} />
      <span>中</span>
      <svg width="20" height="20" viewBox="0 0 20 20" fill="currentColor"><path d="M11 2c3 4 2 10-8 14 6 3 14 0 14-6 0-4-3-7-6-8z" /></svg>
      <ImeDot>°,</ImeDot>
      <KeyboardIcon />
      <User size={20} fill="currentColor" />
      <Wrench size={20} fill="currentColor" />
    </ImeBar>
  </Frame>
);

export default App;
